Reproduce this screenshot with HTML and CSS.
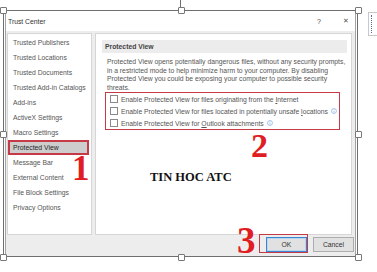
FILE: index.html
```
<!DOCTYPE html>
<html lang="en">
<head>
    <meta charset="UTF-8">
    <meta name="viewport" content="width=device-width, initial-scale=1.0">
    <title>Trust Center</title>
    <link rel="stylesheet" href="styles.css">
</head>
<body>
    <div class="page">
        <div class="picture">
            <span class="stick"></span>
            <span class="handle h-tl"></span>
            <span class="handle h-tm"></span>
            <span class="handle h-tr"></span>
            <span class="handle h-ml"></span>
            <span class="handle h-mr"></span>
            <span class="handle h-bl"></span>
            <span class="handle h-bm"></span>
            <span class="handle h-br"></span>

            <div class="dialog">
                <div class="titlebar">
                    <span class="title">Trust Center</span>
                    <span class="tb-help">?</span>
                    <span class="tb-close">✕</span>
                </div>

                <div class="dialog-body">
                    <ul class="nav">
                        <li>Trusted Publishers</li>
                        <li>Trusted Locations</li>
                        <li>Trusted Documents</li>
                        <li>Trusted Add-in Catalogs</li>
                        <li>Add-ins</li>
                        <li>ActiveX Settings</li>
                        <li>Macro Settings</li>
                        <li class="active">Protected View</li>
                        <li>Message Bar</li>
                        <li>External Content</li>
                        <li>File Block Settings</li>
                        <li>Privacy Options</li>
                    </ul>

                    <div class="content">
                        <div class="section-head">Protected View</div>
                        <p class="desc">
                            Protected View opens potentially dangerous files, without any security prompts,<br>
                            in a restricted mode to help minimize harm to your computer. By disabling<br>
                            Protected View you could be exposing your computer to possible security<br>
                            threats.
                        </p>
                        <div class="options">
                            <label class="opt"><span class="box"></span><span>Enable Protected View for files originating from the <u>I</u>nternet</span></label>
                            <label class="opt"><span class="box"></span><span>Enable Protected View for files located in potentially unsafe <u>l</u>ocations</span>
                                <svg class="info" viewBox="0 0 8 8"><circle cx="4" cy="4" r="3.3"/><path d="M4 3.5v2.6M4 2v0.8"/></svg></label>
                            <label class="opt"><span class="box"></span><span>Enable Protected View for <u>O</u>utlook attachments</span>
                                <svg class="info" viewBox="0 0 8 8"><circle cx="4" cy="4" r="3.3"/><path d="M4 3.5v2.6M4 2v0.8"/></svg></label>
                        </div>
                    </div>
                </div>

                <div class="footer">
                    <button class="btn btn-ok">OK</button>
                    <button class="btn">Cancel</button>
                </div>
            </div>
        </div>

        <div class="anchor"></div>

        <!-- chu thich tren anh -->
        <span class="mark mark-1">1</span>
        <span class="mark mark-2">2</span>
        <span class="mark mark-3">3</span>
        <span class="ok-frame"></span>
        <span class="brand">TIN HOC ATC</span>
    </div>
</body>
</html>
```

FILE: styles.css
```
:root {
    --ui-font: "Liberation Sans", Arial, sans-serif;
    --ui-text: #555555;
    --panel-border: #d6d6d6;
    --dialog-bg: #ededed;
    --mark-red: #e11d24;
    --frame-red: #c63a48;
}

body {
    margin: 0;
    background: #ffffff;
    font-family: var(--ui-font);
    font-size: 6.8px;
    color: var(--ui-text);
}

.page {
    position: relative;
    display: flex;
    align-items: flex-start;
    width: 377px;
    height: 272px;
    overflow: hidden;
}

/* anh dang duoc chon trong Word */
.picture {
    position: relative;
    margin: 10px 0 0 3px;
    width: 355px;
    height: 247px;
    box-sizing: border-box;
    border: 1px solid #6f6f6f;
    flex-shrink: 0;
}

.handle {
    position: absolute;
    width: 5px;
    height: 5px;
    background: #ffffff;
    border: 1px solid #777777;
    border-radius: 1px;
    z-index: 5;
}
.h-tl { left: -4px; top: -4px; }
.h-tm { left: calc(50% - 3px); top: -4px; }
.h-tr { right: -5px; top: -4px; }
.h-ml { left: -4px; top: calc(50% - 3px); }
.h-mr { right: -5px; top: calc(50% - 3px); }
.h-bl { left: -4px; bottom: -5px; }
.h-bm { left: calc(50% - 3px); bottom: -5px; }
.h-br { right: -5px; bottom: -5px; }

.stick {
    position: absolute;
    left: calc(50% - 1px);
    top: -11px;
    width: 1px;
    height: 8px;
    background: #6f6f6f;
}

.dialog {
    display: flex;
    flex-direction: column;
    height: 100%;
    margin: 0 1px;
    border-left: 1px solid #a3a3a3;
    border-right: 1px solid #a3a3a3;
    background: var(--dialog-bg);
}

.titlebar {
    display: flex;
    align-items: center;
    height: 20px;
    padding: 0 6px 0 2px;
    background: #ffffff;
    color: #333333;
}
.title {
    flex: 1;
}
.tb-help {
    margin-right: 22px;
    font-size: 7px;
    color: #444444;
}
.tb-close {
    font-size: 7px;
    color: #555555;
}

.dialog-body {
    display: flex;
    gap: 3px;
    padding: 2px 0 0 1px;
}

.nav {
    list-style: none;
    margin: 0;
    padding: 1px 0 0;
    width: 85px;
    height: 202px;
    box-sizing: border-box;
    background: #ffffff;
    border: 1px solid var(--panel-border);
}
.nav li {
    height: 15px;
    line-height: 15px;
    padding-left: 5px;
    white-space: nowrap;
}
.nav li.active {
    margin-right: 2px;
    background: #cdcdcd;
    color: #262626;
    outline: 2px solid var(--frame-red);
    outline-offset: -2px;
}

.content {
    width: 257px;
    height: 202px;
    box-sizing: border-box;
    padding: 6px 4px 0 6px;
    background: #ffffff;
    border: 1px solid var(--panel-border);
}

.section-head {
    height: 13px;
    line-height: 13px;
    padding-left: 3px;
    background: #ececec;
    color: #444444;
    font-weight: bold;
}

.desc {
    margin: 5px 0 0 5px;
    line-height: 8.6px;
    white-space: nowrap;
}

.options {
    margin: 0 0 0 3px;
    width: 235px;
    box-sizing: border-box;
    border: 1.5px solid var(--frame-red);
}
.opt {
    display: flex;
    align-items: center;
    height: 12px;
    white-space: nowrap;
}
.box {
    width: 6px;
    height: 6px;
    margin: 0 3px 0 4px;
    background: #ffffff;
    border: 1px solid #8a8a8a;
    flex-shrink: 0;
}
.info {
    width: 6px;
    height: 6px;
    margin-left: 3px;
    fill: none;
    stroke: #6d9fd6;
    stroke-width: 0.8;
}

.footer {
    display: flex;
    justify-content: flex-end;
    gap: 6px;
    padding: 2px 1px 0 0;
}
.btn {
    width: 41px;
    height: 15px;
    padding: 0;
    font-family: var(--ui-font);
    font-size: 6.8px;
    color: #333333;
    background: #e1e1e1;
    border: 1px solid #adadad;
}
.btn-ok {
    border: 1px solid #3b86cf;
    box-shadow: inset 0 0 0 1px #b9d4ee;
}

.anchor {
    position: relative;
    margin: 12px 0 0 10px;
    width: 12px;
    height: 22px;
    border: 1px solid #c8c8c8;
    flex-shrink: 0;
}
.anchor::before {
    content: "";
    position: absolute;
    left: 2px;
    top: 2px;
    bottom: 2px;
    border-left: 1px dotted #4a6fa8;
}

/* so danh dau va logo */
.mark {
    position: absolute;
    font-family: "Liberation Serif", "Times New Roman", serif;
    font-weight: bold;
    line-height: 1;
    color: var(--mark-red);
    z-index: 6;
}
.mark-1 { left: 72px; top: 151px; font-size: 35px; }
.mark-2 { left: 251px; top: 129px; font-size: 34px; }
.mark-3 { left: 237px; top: 222px; font-size: 37px; }

.ok-frame {
    position: absolute;
    left: 259px;
    top: 234px;
    width: 49px;
    height: 19px;
    box-sizing: border-box;
    border: 1.5px solid var(--frame-red);
    z-index: 6;
}

.brand {
    position: absolute;
    left: 150px;
    top: 171px;
    font-family: "Liberation Serif", "Times New Roman", serif;
    font-weight: bold;
    font-size: 12.5px;
    line-height: 1;
    color: #111111;
}
```
